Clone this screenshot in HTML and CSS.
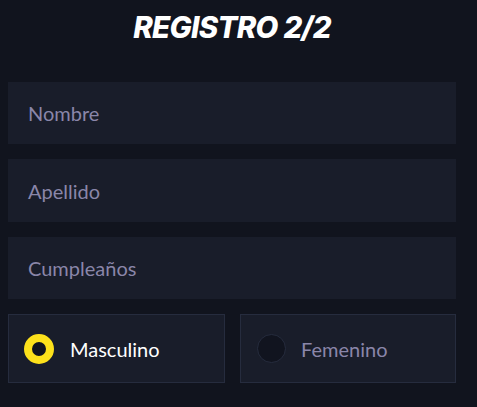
FILE: index.html
```html
<!DOCTYPE html>
<html>
<head>
<meta charset="utf-8">
<link rel="stylesheet" href="styles.css">
</head>
<body>
<div class="page">
  <h1 class="title">REGISTRO 2/2</h1>
  <div class="fields">
    <div class="field">Nombre</div>
    <div class="field tall">Apellido</div>
    <div class="field">Cumpleaños</div>
    <div class="radios">
      <div class="radio active"><span class="dot"></span><span class="label">Masculino</span></div>
      <div class="radio"><span class="dot"></span><span class="label">Femenino</span></div>
    </div>
  </div>
</div>
</body>
</html>
```
FILE: styles.css
```css
html, body {
  margin: 0;
  padding: 0;
  background: #11141e;
}
.page {
  width: 477px;
  height: 407px;
  box-sizing: border-box;
  padding: 0 21px 0 8px;
  font-family: "Lato", "Noto Sans", sans-serif;
  overflow: hidden;
}
.title {
  margin: 0;
  padding-top: 8px;
  height: 82px;
  box-sizing: border-box;
  text-align: center;
  color: #ffffff;
  font-family: "Inter", sans-serif;
  font-weight: 800;
  font-style: italic;
  font-size: 29.5px;
  letter-spacing: -0.7px;
  line-height: 38px;
}
.fields {
  display: flex;
  flex-direction: column;
  gap: 15px;
}
.field {
  height: 62px;
  background: #191d2a;
  color: #8a86a9;
  font-size: 20px;
  display: flex;
  align-items: center;
  padding-left: 20px;
}
.field.tall {
  height: 63px;
}
.radios {
  display: flex;
  gap: 15px;
}
.radio {
  width: 216px;
  height: 69px;
  box-sizing: border-box;
  border: 1px solid #262c3e;
  background: #191d2a;
  display: flex;
  align-items: center;
  padding-left: 16px;
}
.dot {
  flex: none;
  width: 29px;
  height: 29px;
  border-radius: 50%;
  box-sizing: border-box;
  border: 1px solid #262c3e;
  background: #11141f;
  margin-right: 15px;
}
.radio.active {
  width: 217px;
  padding-left: 15px;
}
.radio.active .dot {
  width: 30px;
  height: 30px;
  border: 8px solid #fde11b;
  background: #11141f;
  margin-right: 16px;
}
.label {
  font-size: 20px;
  color: #8a86a9;
}
.radio.active .label {
  color: #ffffff;
}
```
